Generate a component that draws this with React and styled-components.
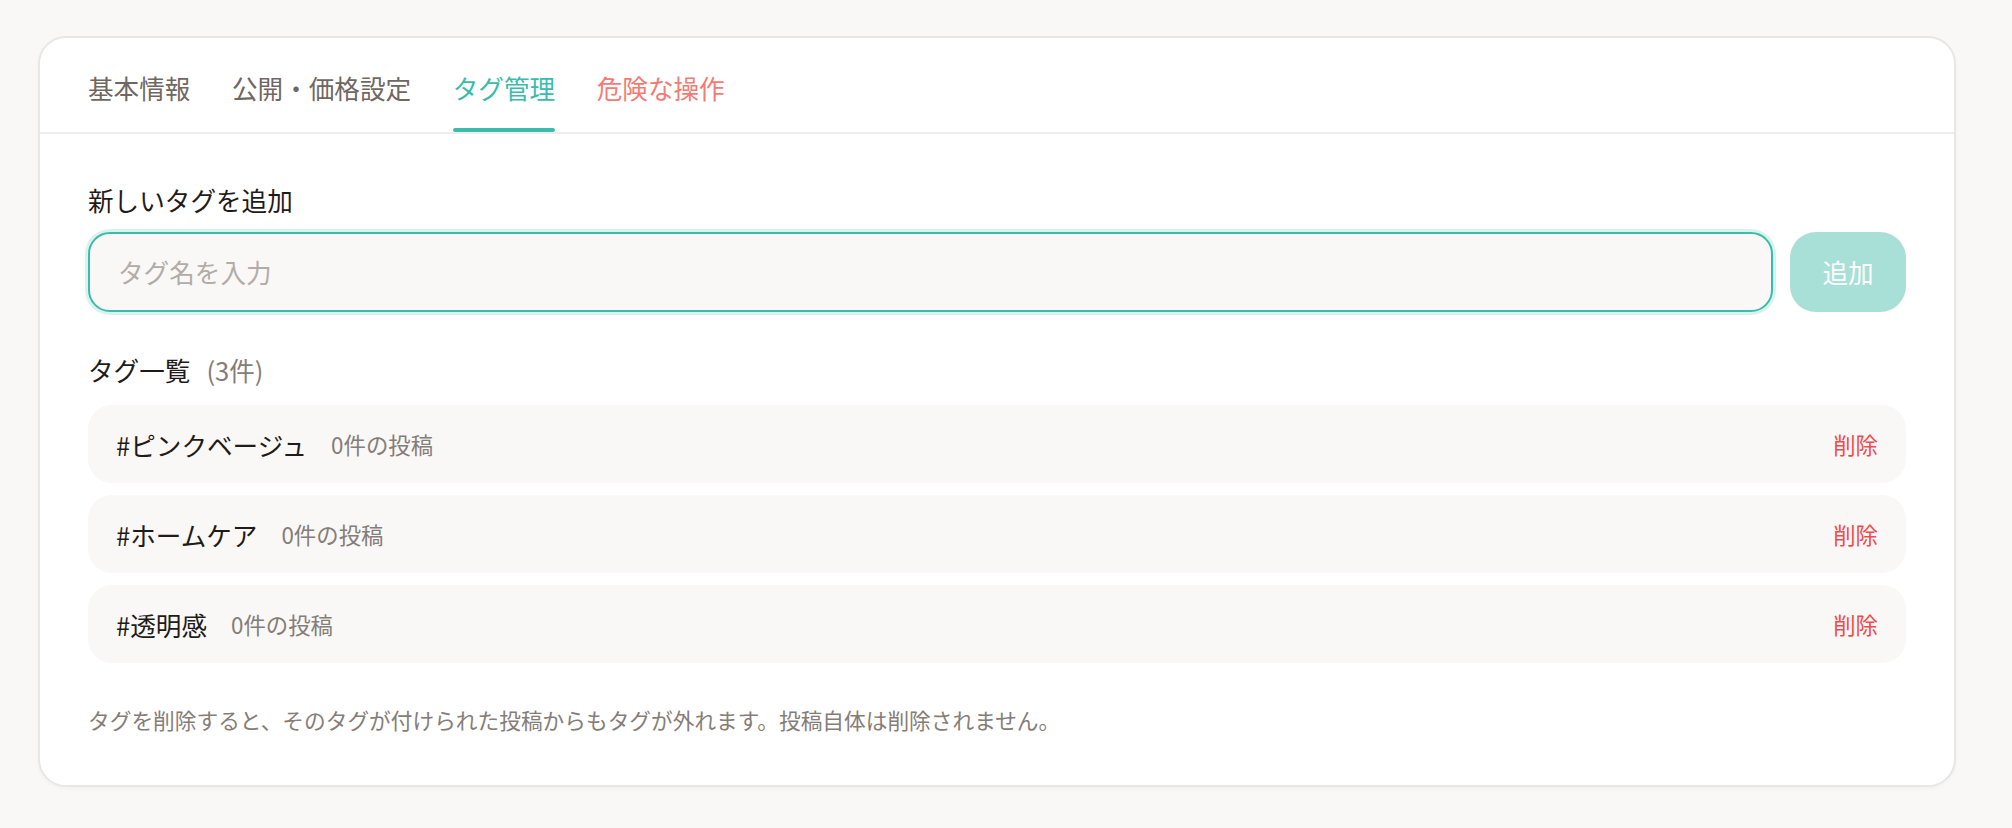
import React from 'react';
import styled, { createGlobalStyle } from 'styled-components';

const GlobalStyle = createGlobalStyle`
  html, body {
    margin: 0;
    padding: 0;
    background: #f9f8f6;
  }
  body {
    font-family: 'Noto Sans CJK JP', 'Noto Sans', sans-serif;
    color: #2b2623;
  }
  * {
    box-sizing: border-box;
  }
`;

const Page = styled.div`
  padding: 36px 56px 40px 38px;
  min-height: 828px;
`;

const Card = styled.section`
  width: 1918px;
  background: #ffffff;
  border: 2px solid #e9e7e4;
  border-radius: 28px;
  box-shadow: 0 2px 4px rgba(40, 30, 20, 0.03);
`;

const TabBar = styled.nav`
  display: flex;
  gap: 41.6px;
  padding: 0 48px;
  border-bottom: 2px solid #efedeb;
`;

const Tab = styled.button`
  position: relative;
  background: none;
  border: none;
  margin: 0;
  padding: 31px 0 25px;
  font-family: inherit;
  font-size: 25.6px;
  line-height: 38.4px;
  font-weight: 400;
  cursor: pointer;
  color: ${({ $active, $danger }) =>
    $active ? '#3bbcaa' : $danger ? '#f47b75' : '#6f6762'};

  &::after {
    content: '';
    display: ${({ $active }) => ($active ? 'block' : 'none')};
    position: absolute;
    left: 0;
    right: 0;
    bottom: 0;
    height: 4px;
    border-radius: 2px;
    background: #3bbcaa;
  }
`;

const Body = styled.div`
  padding: 47px 48px 48px;
`;

const Label = styled.div`
  font-size: 25.6px;
  line-height: 38.4px;
  font-weight: 400;
  color: #1f1b19;
`;

const AddRow = styled.div`
  display: flex;
  gap: 17px;
  margin-top: 12px;
`;

const Input = styled.input`
  flex: 1;
  height: 80px;
  padding: 0 28px;
  border: 2px solid #3bbcaa;
  border-radius: 22px;
  background: #f9f8f6;
  font-family: inherit;
  font-size: 25.6px;
  color: #2b2623;
  outline: none;
  box-shadow: 0 0 0 3px rgba(59, 188, 170, 0.2);

  &::placeholder {
    color: #b2aca8;
  }
`;

const AddButton = styled.button`
  width: 116px;
  height: 80px;
  border: none;
  border-radius: 26px;
  background: #a8dfd7;
  color: #ffffff;
  font-family: inherit;
  font-size: 25.6px;
  font-weight: 400;
  cursor: not-allowed;
`;

const ListHeading = styled.div`
  display: flex;
  align-items: baseline;
  gap: 16px;
  margin-top: 39px;
  font-size: 25.6px;
  line-height: 38.4px;
  font-weight: 400;
  color: #1f1b19;
`;

const Count = styled.span`
  color: #857d78;
`;

const TagList = styled.ul`
  list-style: none;
  margin: 16px 0 0;
  padding: 0;
  display: flex;
  flex-direction: column;
  gap: 12px;
`;

const TagRow = styled.li`
  display: flex;
  align-items: center;
  height: 78px;
  padding: 0 28px;
  background: #f9f8f6;
  border-radius: 24px;
`;

const TagName = styled.span`
  font-size: 25.6px;
  font-weight: 400;
  color: #1f1b19;
`;

const PostCount = styled.span`
  margin-left: 24px;
  font-size: 22.4px;
  color: #857d78;
`;

const DeleteButton = styled.button`
  margin-left: auto;
  background: none;
  border: none;
  padding: 0;
  font-family: inherit;
  font-size: 22.4px;
  color: #f04a4a;
  cursor: pointer;
`;

const Note = styled.p`
  margin: 39px 0 0;
  font-size: 21.7px;
  line-height: 35px;
  color: #857d78;
`;

const tabs = [
  { label: '基本情報' },
  { label: '公開・価格設定' },
  { label: 'タグ管理', active: true },
  { label: '危険な操作', danger: true },
];

const tags = [
  { name: 'ピンクベージュ', posts: 0 },
  { name: 'ホームケア', posts: 0 },
  { name: '透明感', posts: 0 },
];

export default function App() {
  return (
    <>
      <GlobalStyle />
      <Page>
        <Card>
          <TabBar>
            {tabs.map((t) => (
              <Tab key={t.label} $active={t.active} $danger={t.danger}>
                {t.label}
              </Tab>
            ))}
          </TabBar>
          <Body>
            <Label>新しいタグを追加</Label>
            <AddRow>
              <Input placeholder="タグ名を入力" />
              <AddButton>追加</AddButton>
            </AddRow>

            <ListHeading>
              タグ一覧 <Count>(3件)</Count>
            </ListHeading>
            <TagList>
              {tags.map((tag) => (
                <TagRow key={tag.name}>
                  <TagName>#{tag.name}</TagName>
                  <PostCount>{tag.posts}件の投稿</PostCount>
                  <DeleteButton>削除</DeleteButton>
                </TagRow>
              ))}
            </TagList>

            <Note>
              タグを削除すると、そのタグが付けられた投稿からもタグが外れます。投稿自体は削除されません。
            </Note>
          </Body>
        </Card>
      </Page>
    </>
  );
}
